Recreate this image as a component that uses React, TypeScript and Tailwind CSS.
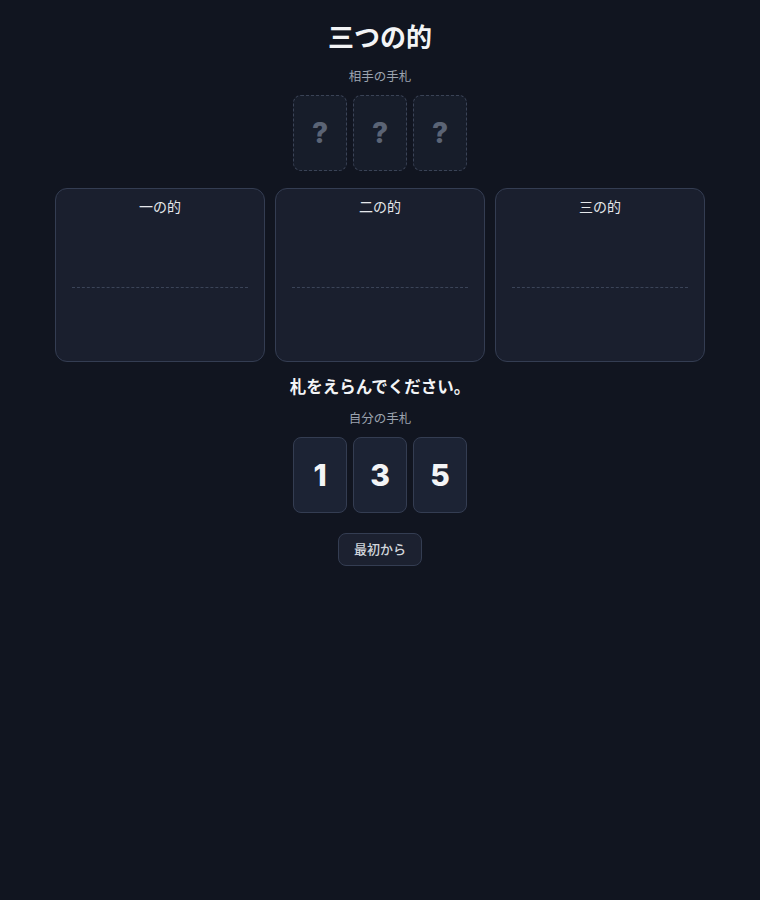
const opponent = [0, 1, 2];
const targets = ['一の的', '二の的', '三の的'];
const hand = [1, 3, 5];

const FONT = "font-['Inter','Noto_Sans_CJK_JP',sans-serif]";

export default function App() {
    return (
        <div className={`min-h-screen w-full bg-[#111520] text-gray-100 ${FONT} flex flex-col items-center px-[55px] pt-[20px]`}>
            <h1 className="text-[26px] leading-[36px] font-bold text-[#f3f4f6]">三つの的</h1>

            <p className="mt-[11px] text-[12.5px] leading-5 text-[#9ca3af]">相手の手札</p>
            <div className="mt-2 flex gap-[6px]">
                {opponent.map((i) => (
                    <div
                        key={i}
                        className="w-[54px] h-[76px] rounded-lg border border-dashed border-[#3a4356] bg-[#171d2a] flex items-center justify-center text-[28px] font-extrabold text-[#5b6475]"
                    >
                        ?
                    </div>
                ))}
            </div>

            <div className="mt-[17px] w-full grid grid-cols-3 gap-[10px]">
                {targets.map((name) => (
                    <div
                        key={name}
                        className="h-[174px] rounded-xl border border-[#343d52] bg-[#1a1f2e] flex flex-col pt-[8px]"
                    >
                        <div className="text-center text-[14px] leading-5 font-normal text-[#e5e7eb]">{name}</div>
                        <div className="mx-4 mt-[70px] border-t border-dashed border-[#3b4458]" />
                    </div>
                ))}
            </div>

            <p className="mt-[13px] text-[16.5px] leading-6 font-bold text-[#f3f4f6]">札をえらんでください。</p>

            <p className="mt-[10px] text-[12.5px] leading-5 text-[#9ca3af]">自分の手札</p>
            <div className="mt-2 flex gap-[6px]">
                {hand.map((n) => (
                    <button
                        key={n}
                        className="w-[54px] h-[76px] rounded-lg border border-[#343d52] bg-[#1c2334] flex items-center justify-center text-[30px] font-extrabold text-[#f3f4f6]"
                    >
                        {n}
                    </button>
                ))}
            </div>

            <button className="mt-5 h-[33px] px-[15px] rounded-lg border border-[#343d52] bg-[#1c2130] text-[13px] font-medium text-[#d1d5db]">
                最初から
            </button>
        </div>
    );
}
